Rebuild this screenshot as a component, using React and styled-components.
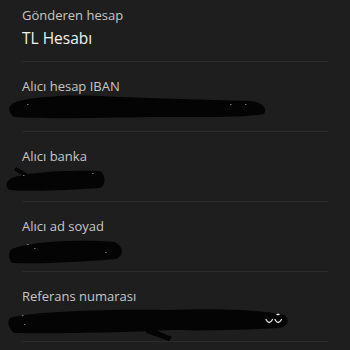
import React from "react";
import styled, { createGlobalStyle } from "styled-components";

const Global = createGlobalStyle`
  html, body { margin: 0; padding: 0; background: #1e1e1e; }
  body { font-family: "Open Sans", "Noto Sans", sans-serif; }
`;

const Screen = styled.div`
  width: 350px;
  height: 350px;
  overflow: hidden;
  background: #1e1e1e;
  display: flex;
  flex-direction: column;
`;

const Row = styled.div`
  margin: 0 22px;
  padding: ${(p) => (p.$first ? "7px" : "16px")} 0 13px;
  border-bottom: 1px solid #2b2b2b;
  display: flex;
  flex-direction: column;
  gap: ${(p) => (p.$first ? "5px" : "4px")};
`;

const Label = styled.div`
  font-size: 13px;
  line-height: 16px;
  font-weight: 400;
  color: #c6c6c6;
`;

const Value = styled.div`
  font-size: 15.5px;
  line-height: 20px;
  font-weight: 400;
  color: #f2f2f2;
  height: 20px;
  position: relative;
`;

const Redaction = styled.svg`
  position: absolute;
  left: -22px;
  top: -10px;
  width: 350px;
  height: 40px;
  overflow: visible;
`;

const blobs = {
  iban: {
    top: 98,
    paths: [
      "M12,104 C20,99 40,97 60,96 C80,95 100,96 120,97 C160,98 200,100 250,101 C262,102 268,108 264,114 C240,118 200,117 150,117 C100,118 40,119 14,117 C8,112 8,107 12,104 Z",
    ],
    specks: [[27, 104], [230, 104], [245, 104]],
  },
  bank: {
    top: 168,
    paths: [
      "M10,179 C20,173 60,170 100,171 C106,175 106,186 100,188 C70,190 30,192 9,190 C5,186 6,182 10,179 Z",
      "M16,167 L28,174 L25,177 L14,170 Z",
    ],
    specks: [[23, 175], [92, 173]],
  },
  name: {
    top: 238,
    paths: [
      "M12,249 C30,241 80,239 115,242 C124,247 124,256 116,259 C80,262 40,264 12,263 C8,258 8,252 12,249 Z",
    ],
    specks: [[27, 244], [34, 248], [105, 252]],
  },
  ref: {
    top: 308,
    paths: [
      "M10,318 C30,311 120,309 170,310 C220,308 260,310 285,315 C290,320 288,326 280,328 C240,330 200,331 170,330 C140,332 60,334 14,333 C8,328 7,322 10,318 Z",
      "M148,327 L172,337 L169,341 L146,333 Z",
    ],
    specks: [[22, 315], [24, 324]],
    digits: true,
  },
};

function Scribble({ kind }) {
  const b = blobs[kind];
  const y0 = b.top - 10;
  return (
    <Redaction viewBox={`0 ${y0} 350 40`}>
      {b.paths.map((d, i) => (
        <path key={i} d={d} fill="#040404" />
      ))}
      {b.specks.map(([x, y], i) => (
        <rect key={i} x={x} y={y} width="1.5" height="1" fill="#bdbdbd" opacity="0.6" />
      ))}
      {b.digits && (
        <g fill="none" stroke="#e6e6e6" strokeWidth="1.3" strokeLinecap="round">
          <path d="M266,319.5 Q269,325.5 272.5,319.5" />
          <path d="M275,319.5 Q278,325.5 281.5,319.5" />
          <path d="M277,314.5 L279,314.5" />
        </g>
      )}
    </Redaction>
  );
}

export default function App() {
  return (
    <Screen>
      <Global />
      <Row $first>
        <Label>Gönderen hesap</Label>
        <Value>TL Hesabı</Value>
      </Row>
      <Row>
        <Label>Alıcı hesap IBAN</Label>
        <Value>
          <Scribble kind="iban" />
        </Value>
      </Row>
      <Row>
        <Label>Alıcı banka</Label>
        <Value>
          <Scribble kind="bank" />
        </Value>
      </Row>
      <Row>
        <Label>Alıcı ad soyad</Label>
        <Value>
          <Scribble kind="name" />
        </Value>
      </Row>
      <Row>
        <Label>Referans numarası</Label>
        <Value>
          <Scribble kind="ref" />
        </Value>
      </Row>
    </Screen>
  );
}
